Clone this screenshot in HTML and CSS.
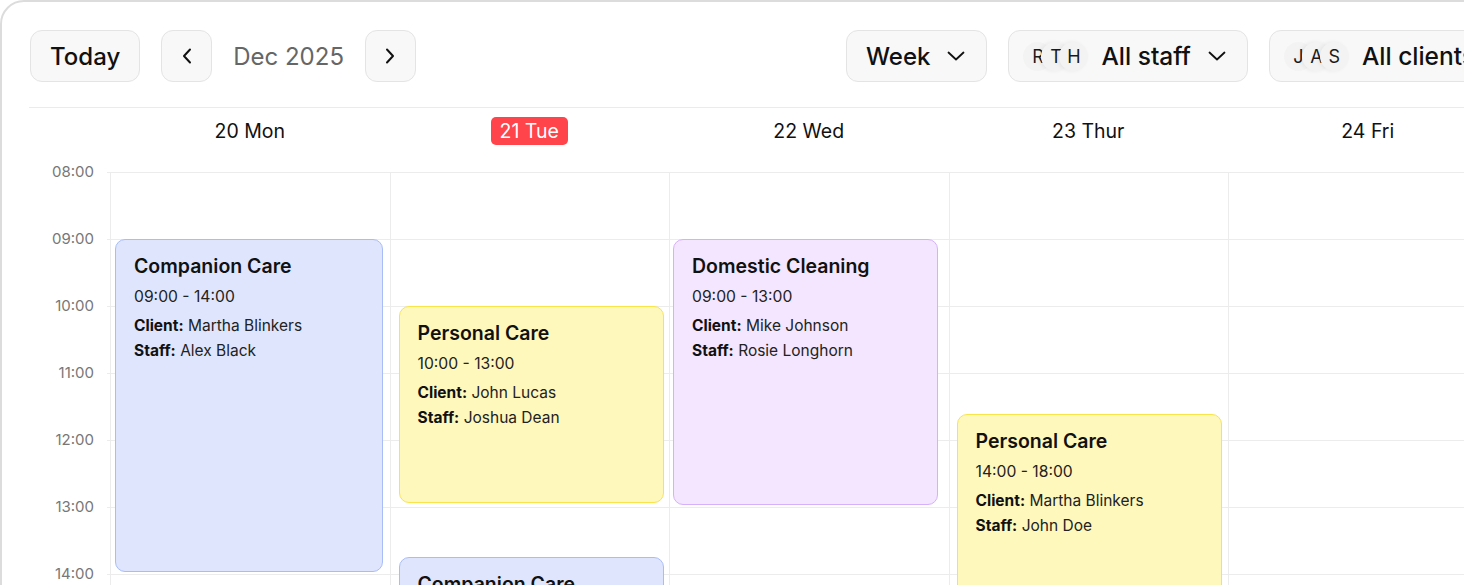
FILE: index.html
```html
<!DOCTYPE html>
<html lang="en">
<head>
<meta charset="utf-8">
<title>Calendar</title>
<link rel="stylesheet" href="styles.css">
</head>
<body>
<div class="frame">
  <div class="toolbar">
    <div class="group">
      <button class="btn btn-text">Today</button>
      <button class="btn btn-icon" aria-label="Previous">
        <svg width="10" height="16" viewBox="0 0 10 16"><path d="M8 1.5 L2 8 L8 14.5" fill="none" stroke="#111" stroke-width="2" stroke-linecap="round" stroke-linejoin="round"/></svg>
      </button>
      <span class="month">Dec 2025</span>
      <button class="btn btn-icon" aria-label="Next">
        <svg width="10" height="16" viewBox="0 0 10 16"><path d="M2 1.5 L8 8 L2 14.5" fill="none" stroke="#111" stroke-width="2" stroke-linecap="round" stroke-linejoin="round"/></svg>
      </button>
    </div>
    <div class="group group-right">
      <button class="btn btn-select">Week
        <svg class="chev" width="18" height="10" viewBox="0 0 18 10"><path d="M1.5 1.5 L9 8.5 L16.5 1.5" fill="none" stroke="#111" stroke-width="1.8" stroke-linecap="round" stroke-linejoin="round"/></svg>
      </button>
      <button class="btn btn-select btn-people">
        <span class="avatars"><span class="av">R</span><span class="av">T</span><span class="av">H</span></span>
        All staff
        <svg class="chev" width="18" height="10" viewBox="0 0 18 10"><path d="M1.5 1.5 L9 8.5 L16.5 1.5" fill="none" stroke="#111" stroke-width="1.8" stroke-linecap="round" stroke-linejoin="round"/></svg>
      </button>
      <button class="btn btn-select btn-people">
        <span class="avatars"><span class="av">J</span><span class="av">A</span><span class="av">S</span></span>
        All clients
        <svg class="chev" width="18" height="10" viewBox="0 0 18 10"><path d="M1.5 1.5 L9 8.5 L16.5 1.5" fill="none" stroke="#111" stroke-width="1.8" stroke-linecap="round" stroke-linejoin="round"/></svg>
      </button>
    </div>
  </div>

  <div class="calendar">
    <div class="head">
      <div class="gutter-head"></div>
      <div class="day-head"><span class="day-label">20 Mon</span></div>
      <div class="day-head"><span class="day-label today">21 Tue</span></div>
      <div class="day-head"><span class="day-label">22 Wed</span></div>
      <div class="day-head"><span class="day-label">23 Thur</span></div>
      <div class="day-head"><span class="day-label">24 Fri</span></div>
    </div>
    <div class="body">
      <div class="gutter">
        <div class="hour"><span>08:00</span></div>
        <div class="hour"><span>09:00</span></div>
        <div class="hour"><span>10:00</span></div>
        <div class="hour"><span>11:00</span></div>
        <div class="hour"><span>12:00</span></div>
        <div class="hour"><span>13:00</span></div>
        <div class="hour"><span>14:00</span></div>
        <div class="hour"><span>15:00</span></div>
      </div>
      <div class="days">
        <div class="day">
          <div class="ev ev-blue" style="top:67px;height:333px;left:4px;right:7px">
            <div class="ev-title">Companion Care</div>
            <div class="ev-time">09:00 - 14:00</div>
            <div class="ev-line"><b>Client:</b> Martha Blinkers</div>
            <div class="ev-line"><b>Staff:</b> Alex Black</div>
          </div>
        </div>
        <div class="day">
          <div class="ev ev-yellow" style="top:134px;height:197px;left:8px;right:5px">
            <div class="ev-title">Personal Care</div>
            <div class="ev-time">10:00 - 13:00</div>
            <div class="ev-line"><b>Client:</b> John Lucas</div>
            <div class="ev-line"><b>Staff:</b> Joshua Dean</div>
          </div>
          <div class="ev ev-blue" style="top:385px;height:200px;left:8px;right:5px">
            <div class="ev-title">Companion Care</div>
            <div class="ev-time">13:45 - 16:00</div>
          </div>
        </div>
        <div class="day">
          <div class="ev ev-purple" style="top:67px;height:266px;left:3px;right:11px">
            <div class="ev-title">Domestic Cleaning</div>
            <div class="ev-time">09:00 - 13:00</div>
            <div class="ev-line"><b>Client:</b> Mike Johnson</div>
            <div class="ev-line"><b>Staff:</b> Rosie Longhorn</div>
          </div>
        </div>
        <div class="day">
          <div class="ev ev-yellow" style="top:242px;height:268px;left:7px;right:6px">
            <div class="ev-title">Personal Care</div>
            <div class="ev-time">14:00 - 18:00</div>
            <div class="ev-line"><b>Client:</b> Martha Blinkers</div>
            <div class="ev-line"><b>Staff:</b> John Doe</div>
          </div>
        </div>
        <div class="day"></div>
      </div>
    </div>
  </div>
</div>
</body>
</html>
```

FILE: styles.css
```css
* { box-sizing: border-box; }
html, body { margin: 0; padding: 0; background: #ffffff; }
body {
  width: 1464px;
  height: 585px;
  overflow: hidden;
  font-family: Inter, "Noto Sans", "Liberation Sans", sans-serif;
  color: #111;
}

.frame {
  width: 1620px;
  height: 760px;
  border: 2px solid #dcdcdc;
  border-radius: 24px;
  padding: 28px 0 0 28px;
  background: #fff;
}

/* toolbar */
.toolbar {
  display: flex;
  align-items: center;
  height: 52px;
}
.group {
  display: flex;
  align-items: center;
  gap: 21px;
}
.group-right {
  margin-left: 430px;
}
.btn {
  height: 52px;
  border: 1.5px solid #e4e4e4;
  background: #f8f8f8;
  border-radius: 12px;
  font-family: inherit;
  font-size: 24px;
  font-weight: 500;
  color: #111;
  display: flex;
  align-items: center;
  padding: 0 19px;
  cursor: pointer;
}
.btn-icon {
  width: 51px;
  padding: 0;
  justify-content: center;
}
.month {
  font-size: 24px;
  color: #666;
  font-weight: 400;
}
.btn-select {
  gap: 0;
  padding: 0 20px 0 19px;
}
.btn-people {
  padding-left: 14px;
  font-size: 24.5px;
}
.chev {
  margin-left: 17px;
  margin-right: 1px;
}
.avatars {
  display: flex;
  align-items: center;
  margin-right: 13px;
}
.av {
  width: 29px;
  height: 29px;
  border-radius: 50%;
  background: #f3f3f3;
  display: flex;
  align-items: center;
  justify-content: center;
  font-size: 18px;
  font-weight: 400;
  color: #1a1a1a;
  box-shadow: -2px 0 4px rgba(0, 0, 0, 0.06);
}
.av + .av { margin-left: -11px; }
.av:first-child { box-shadow: none; }

/* calendar */
.calendar {
  margin-top: 25px;
  border-top: 1px solid #ebebeb;
  margin-left: -1px;
}
.head {
  display: grid;
  grid-template-columns: 81px repeat(5, 279.5px);
  height: 64px;
}
.day-head {
  display: flex;
  justify-content: center;
  padding-top: 9px;
}
.day-label {
  height: 28px;
  line-height: 29px;
  font-size: 19.5px;
  font-weight: 400;
  color: #111;
  padding: 0 9px;
  border-radius: 5px;
}
.day-label.today {
  background: #ff444c;
  color: #fff;
}

.body {
  display: flex;
}
.gutter {
  width: 81px;
  flex: none;
}
.hour {
  height: 67px;
  position: relative;
}
.hour::after {
  content: "";
  position: absolute;
  right: 0;
  top: 0;
  width: 3px;
  height: 1px;
  background: #ececec;
}
.hour span {
  display: block;
  line-height: 20px;
  transform: translateY(-50%);
  text-align: right;
  padding-right: 16px;
  font-size: 15px;
  color: #777;
}
.days {
  display: grid;
  grid-template-columns: repeat(5, 279.5px);
  background: repeating-linear-gradient(to bottom, #ececec 0, #ececec 1px, transparent 1px, transparent 67px);
}
.day {
  position: relative;
  height: 536px;
  border-left: 1px solid #ececec;
}

/* events */
.ev {
  position: absolute;
  border: 1px solid;
  border-radius: 10px;
  padding: 14px 18px;
  overflow: hidden;
}
.ev-blue { background: #dfe5fd; border-color: #a8bdf8; }
.ev-yellow { background: #fff8bd; border-color: #fbe34a; }
.ev-purple { background: #f4e6fe; border-color: #d6b0fb; }
.ev-title {
  font-size: 19.5px;
  font-weight: 600;
  line-height: 24px;
  color: #111;
}
.ev-time {
  margin-top: 9px;
  font-size: 15.7px;
  line-height: 20px;
  color: #222;
}
.ev-line {
  font-size: 15.5px;
  line-height: 25px;
  color: #222;
}
.ev-time + .ev-line { margin-top: 6px; }
.ev-line b { font-weight: 700; color: #111; }
```
